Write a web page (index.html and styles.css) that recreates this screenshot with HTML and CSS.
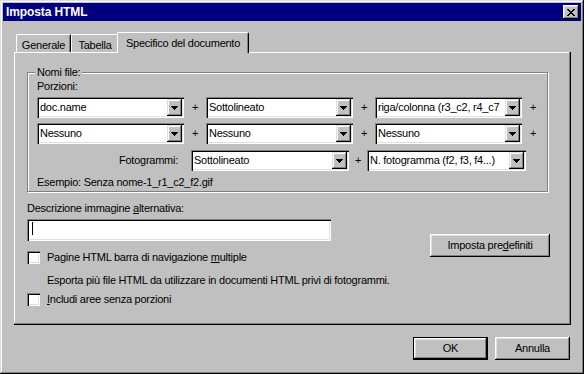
FILE: index.html
```html
<!DOCTYPE html>
<html lang="it">
<head>
    <meta charset="UTF-8">
    <title>Imposta HTML</title>
    <link rel="stylesheet" href="styles.css">
</head>
<body>
    <div class="window">
        <div class="titlebar">
            <span class="title">Imposta HTML</span>
            <div class="close">
                <svg width="8" height="7" viewBox="0 0 8 7" shape-rendering="crispEdges">
                    <path d="M0 0h2v1H0z M6 0h2v1H6z M1 1h2v1H1z M5 1h2v1H5z M2 2h4v1H2z M3 3h2v1H3z M2 4h4v1H2z M1 5h2v1H1z M5 5h2v1H5z M0 6h2v1H0z M6 6h2v1H6z" fill="#000"/>
                </svg>
            </div>
        </div>

        <div class="content">
            <div class="tabs">
                <div class="tab tab-general">Generale</div>
                <div class="tab tab-table">Tabella</div>
                <div class="tab tab-doc active">Specifico del documento</div>
            </div>

            <div class="panel">
                <div class="group">
                    <span class="group-title">Nomi file:</span>
                    <div class="label">Porzioni:</div>

                    <div class="row row-first">
                        <div class="combo"><span class="combo-text">doc.name</span><span class="combo-btn"><svg width="7" height="4" viewBox="0 0 7 4" shape-rendering="crispEdges"><path d="M0 0h7v1H0z M1 1h5v1H1z M2 2h3v1H2z M3 3h1v1H3z"/></svg></span></div>
                        <span class="plus">+</span>
                        <div class="combo"><span class="combo-text">Sottolineato</span><span class="combo-btn"><svg width="7" height="4" viewBox="0 0 7 4" shape-rendering="crispEdges"><path d="M0 0h7v1H0z M1 1h5v1H1z M2 2h3v1H2z M3 3h1v1H3z"/></svg></span></div>
                        <span class="plus">+</span>
                        <div class="combo"><span class="combo-text">riga/colonna (r3_c2, r4_c7</span><span class="combo-btn"><svg width="7" height="4" viewBox="0 0 7 4" shape-rendering="crispEdges"><path d="M0 0h7v1H0z M1 1h5v1H1z M2 2h3v1H2z M3 3h1v1H3z"/></svg></span></div>
                        <span class="plus">+</span>
                    </div>

                    <div class="row row-second">
                        <div class="combo"><span class="combo-text">Nessuno</span><span class="combo-btn"><svg width="7" height="4" viewBox="0 0 7 4" shape-rendering="crispEdges"><path d="M0 0h7v1H0z M1 1h5v1H1z M2 2h3v1H2z M3 3h1v1H3z"/></svg></span></div>
                        <span class="plus">+</span>
                        <div class="combo"><span class="combo-text">Nessuno</span><span class="combo-btn"><svg width="7" height="4" viewBox="0 0 7 4" shape-rendering="crispEdges"><path d="M0 0h7v1H0z M1 1h5v1H1z M2 2h3v1H2z M3 3h1v1H3z"/></svg></span></div>
                        <span class="plus">+</span>
                        <div class="combo"><span class="combo-text">Nessuno</span><span class="combo-btn"><svg width="7" height="4" viewBox="0 0 7 4" shape-rendering="crispEdges"><path d="M0 0h7v1H0z M1 1h5v1H1z M2 2h3v1H2z M3 3h1v1H3z"/></svg></span></div>
                        <span class="plus">+</span>
                    </div>

                    <div class="row row-frames">
                        <span class="frames-label">Fotogrammi:</span>
                        <div class="combo combo-frame"><span class="combo-text">Sottolineato</span><span class="combo-btn"><svg width="7" height="4" viewBox="0 0 7 4" shape-rendering="crispEdges"><path d="M0 0h7v1H0z M1 1h5v1H1z M2 2h3v1H2z M3 3h1v1H3z"/></svg></span></div>
                        <span class="plus plus-narrow">+</span>
                        <div class="combo combo-frame-num"><span class="combo-text">N. fotogramma (f2, f3, f4...)</span><span class="combo-btn"><svg width="7" height="4" viewBox="0 0 7 4" shape-rendering="crispEdges"><path d="M0 0h7v1H0z M1 1h5v1H1z M2 2h3v1H2z M3 3h1v1H3z"/></svg></span></div>
                    </div>

                    <div class="example">Esempio: Senza nome-1_r1_c2_f2.gif</div>
                </div>

                <div class="lower">
                    <div class="lower-left">
                        <div class="label">Descrizione immagine <u>a</u>lternativa:</div>
                        <div class="textbox"><span class="caret"></span></div>

                        <div class="check-row check-first">
                            <span class="check"></span>
                            <span>Pagine HTML barra di navigazione <u>m</u>ultiple</span>
                        </div>
                        <div class="hint">Esporta più file HTML da utilizzare in documenti HTML privi di fotogrammi.</div>
                        <div class="check-row check-second">
                            <span class="check"></span>
                            <span><u>I</u>ncludi aree senza porzioni</span>
                        </div>
                    </div>

                    <div class="btn btn-defaults">Imposta pre<u>d</u>efiniti</div>
                </div>
            </div>

            <div class="footer">
                <div class="btn default">OK</div>
                <div class="btn">Annulla</div>
            </div>
        </div>
    </div>
</body>
</html>
```

FILE: styles.css
```css
* {
    box-sizing: border-box;
}

body {
    margin: 0;
    background: #c0c0c0;
    color: #000;
    font-family: "Liberation Sans", Arial, sans-serif;
    font-size: 11px;
    line-height: 13px;
    letter-spacing: -0.25px;
}

u {
    text-decoration: underline;
}

.window {
    width: 584px;
    height: 374px;
    padding: 3px;
    background: #c0c0c0;
    box-shadow: inset -1px -1px #000, inset 1px 1px #dfdfdf, inset -2px -2px #808080, inset 2px 2px #fff;
}

/* title bar */
.titlebar {
    height: 18px;
    background: #000080;
    display: flex;
    align-items: center;
    justify-content: space-between;
    padding: 0 2px 0 3px;
}

.title {
    color: #fff;
    font-weight: bold;
    font-size: 12px;
    line-height: 18px;
    letter-spacing: -0.1px;
}

.close {
    width: 16px;
    height: 14px;
    background: #c0c0c0;
    display: flex;
    align-items: center;
    justify-content: center;
    box-shadow: inset -1px -1px #000, inset 1px 1px #fff, inset -2px -2px #808080, inset 2px 2px #dfdfdf;
}

.close svg {
    display: block;
}

.content {
    padding: 11px 10px 0 11px;
}

/* tabs */
.tabs {
    display: flex;
    align-items: flex-end;
    height: 20px;
    padding-left: 2px;
}

.tab {
    height: 18px;
    padding-top: 4px;
    text-align: center;
    white-space: nowrap;
    background: #c0c0c0;
    border: 1px solid #fff;
    border-bottom: none;
    border-right-color: #000;
    border-radius: 2px 2px 0 0;
    box-shadow: inset -1px 0 #808080;
}

.tab-general { width: 55px; }
.tab-table { width: 48px; }
.tab-doc { width: 132px; }

.tab.active {
    height: 21px;
    margin: 0 -2px -1px -2px;
    position: relative;
    z-index: 1;
}

.panel {
    width: 557px;
    height: 273px;
    padding: 20px 21px 0 13px;
    box-shadow: inset -1px -1px #000, inset -2px -2px #808080, inset 1px 1px #fff;
}

/* "Nomi file" group */
.group {
    position: relative;
    width: 521px;
    height: 120px;
    padding: 7px 0 0 9px;
    border: 1px solid #808080;
    box-shadow: inset 1px 1px #fff, 1px 1px #fff;
}

.group-title {
    position: absolute;
    top: -7px;
    left: 7px;
    padding: 0 2px;
    background: #c0c0c0;
}

.row {
    display: flex;
    align-items: center;
    height: 21px;
}

.row-first { margin-top: 4px; }
.row-second { margin-top: 5px; }
.row-frames { margin-top: 6px; }

.combo {
    display: flex;
    width: 147px;
    height: 21px;
    padding: 2px;
    background: #fff;
    box-shadow: inset 1px 1px #808080, inset 2px 2px #000, inset -1px -1px #fff, inset -2px -2px #dfdfdf;
}

.combo-frame { width: 158px; }
.combo-frame-num { width: 159px; }

.combo-text {
    flex: 1;
    padding-left: 1px;
    line-height: 17px;
    white-space: nowrap;
    overflow: hidden;
}

.combo-btn {
    width: 15px;
    height: 17px;
    flex: none;
    display: flex;
    align-items: center;
    justify-content: center;
    background: #c0c0c0;
    box-shadow: inset -1px -1px #000, inset 1px 1px #dfdfdf, inset -2px -2px #808080, inset 2px 2px #fff;
}

.combo-btn svg {
    display: block;
    fill: #000;
}

.plus {
    width: 22px;
    text-align: center;
    line-height: 19px;
}

.plus-narrow {
    width: 18px;
}

.frames-label {
    width: 141px;
    margin-right: 13px;
    text-align: right;
}

.example {
    margin-top: 5px;
}

/* lower section */
.lower {
    display: flex;
    justify-content: space-between;
    margin-top: 10px;
}

.textbox {
    width: 304px;
    height: 22px;
    margin-top: 4px;
    padding: 3px 0 0 5px;
    background: #fff;
    box-shadow: inset 1px 1px #808080, inset 2px 2px #000, inset -1px -1px #fff, inset -2px -2px #dfdfdf;
}

.caret {
    display: block;
    width: 1px;
    height: 13px;
    background: #000;
}

.check-row {
    display: flex;
    align-items: center;
    gap: 7px;
    height: 13px;
}

.check-first { margin-top: 10px; }
.check-second { margin-top: 6px; }

.check {
    width: 13px;
    height: 13px;
    flex: none;
    background: #fff;
    box-shadow: inset 1px 1px #808080, inset 2px 2px #000, inset -1px -1px #fff, inset -2px -2px #dfdfdf;
}

.hint {
    margin: 10px 0 0 20px;
}

/* buttons */
.btn {
    width: 75px;
    height: 23px;
    display: flex;
    align-items: center;
    justify-content: center;
    background: #c0c0c0;
    box-shadow: inset -1px -1px #000, inset 1px 1px #fff, inset -2px -2px #808080, inset 2px 2px #dfdfdf;
}

.btn.default {
    box-shadow: inset 0 0 0 1px #000, inset -2px -2px #000, inset 2px 2px #fff, inset -3px -3px #808080, inset 3px 3px #dfdfdf;
}

.btn-defaults {
    width: 120px;
    margin-top: 32px;
}

.footer {
    display: flex;
    justify-content: flex-end;
    gap: 7px;
    margin-top: 12px;
    padding-right: 1px;
}
```
